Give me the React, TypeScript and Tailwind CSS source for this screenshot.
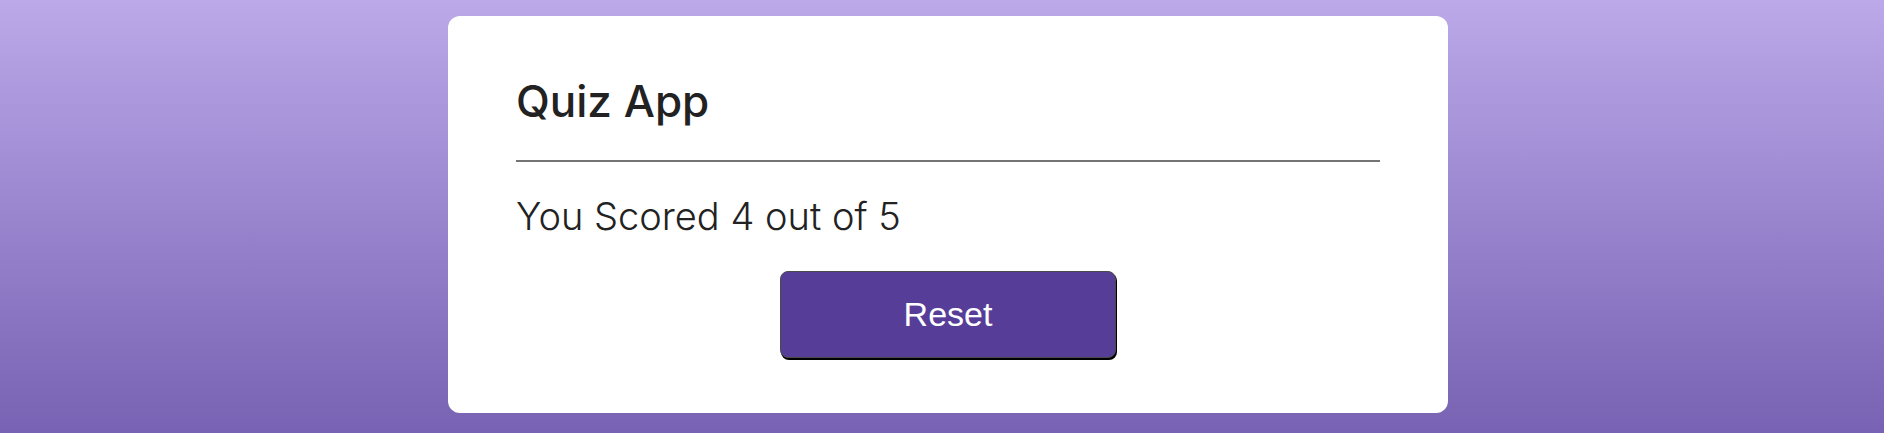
import { useState } from 'react';

// --- QUIZ RESULT SCREEN ---
const TOTAL = 5;

export default function App() {
  const [score, setScore] = useState(4);

  return (
    <div className="min-h-[433px] w-full bg-gradient-to-b from-[#bba9e9] to-[#7862b3] pt-[16px] pb-[16px] flex justify-center pl-[12px]">
      <div className="w-[1000px] h-[397px] bg-white rounded-[12px] px-[68px] pt-[55px] flex flex-col">
        <h1 className="text-[#222] text-[44px] leading-[60px] font-medium" style={{ fontFamily: 'Inter, sans-serif' }}>
          Quiz App
        </h1>
        <div className="h-[2px] bg-[#747474] mt-[29px]" />
        <p className="text-[#222] text-[38px] leading-[48px] font-light mt-[30px]" style={{ fontFamily: 'Inter, sans-serif' }}>
          You Scored {score} out of {TOTAL}
        </p>
        <div className="flex justify-center mt-[31px]">
          <button
            onClick={() => setScore(0)}
            className="w-[336px] h-[87px] bg-[#563e98] text-white text-[34px] rounded-[8px] border border-[#4a4a4a] shadow-[1px_2px_0_#000]"
            style={{ fontFamily: '"Liberation Sans", Arial, sans-serif' }}
          >
            Reset
          </button>
        </div>
      </div>
    </div>
  );
}
